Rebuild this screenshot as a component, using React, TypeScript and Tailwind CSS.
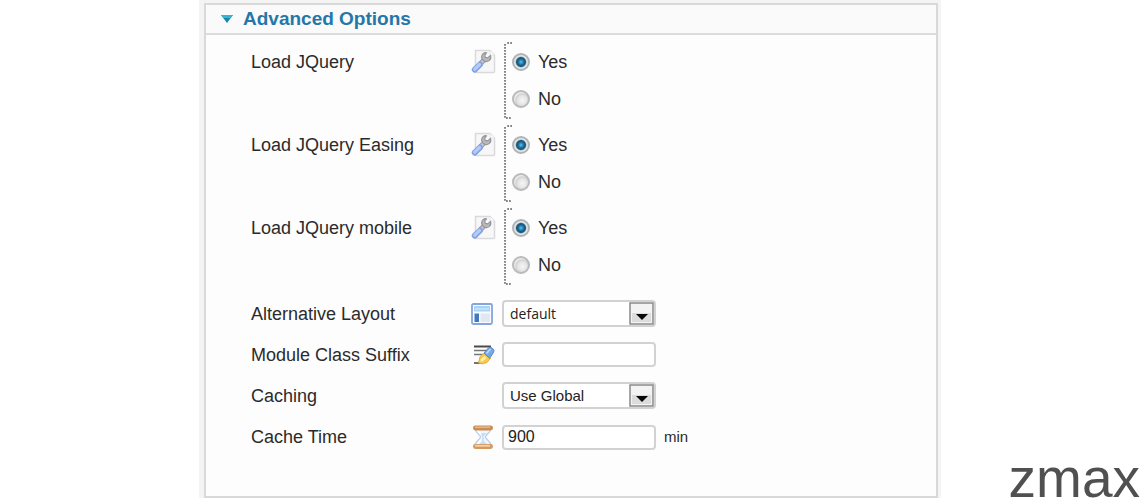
import { useState } from "react";
import type { ReactNode } from "react";

function WrenchIcon() {
  return (
    <svg width="25" height="25" viewBox="0 0 25 25" aria-hidden="true">
      <path d="M4.500 1.500H19l4.500 4.500v16.500a1 1 0 0 1-1 1h-17a1 1 0 0 1-1-1z" fill="#f7f7f8" stroke="#dadadc" strokeWidth="1.500" />
      <path d="M19 1.500V6h4.500" fill="#fff" stroke="#e2e2e4" />
      <path d="M9.500 14.500l4.500-4.500" stroke="#9a9a9e" strokeWidth="5" />
      <path d="M9.500 14.500l4.500-4.500" stroke="#c8c8cb" strokeWidth="3" />
      <path d="M14 3.600a4.400 4.400 0 0 0-3 6 4.500 4.500 0 0 0 7 2 4.400 4.400 0 0 0 1.500-5l-2.900 2.300-2.400-.6-.4-2.400 1.600-2a4 4 0 0 0-1.400-.3z" fill="#b9b9bd" stroke="#96969a" strokeWidth="1.200" />
      <path d="M3.800 20.700l5.200-5.200" stroke="#86a2e2" strokeWidth="6" strokeLinecap="round" />
      <path d="M3.800 20.200l4.700-4.700" stroke="#b4cbf7" strokeWidth="3.200" strokeLinecap="round" />
    </svg>
  );
}

function LayoutIcon() {
  return (
    <svg width="22" height="22" viewBox="0 0 22 22" aria-hidden="true">
      <rect x="1" y="1" width="20" height="20" rx="1.500" fill="#f8fbff" stroke="#86a5da" strokeWidth="1.800" />
      <rect x="3" y="3" width="16" height="5.500" fill="#a8d3f5" />
      <path d="M4 6h14" stroke="#d9efff" />
      <rect x="3.500" y="10.500" width="4.500" height="8.500" fill="#4478bd" />
      <rect x="9.500" y="10.500" width="9.500" height="8.500" fill="#e2e7f3" />
    </svg>
  );
}

function PencilIcon() {
  return (
    <svg width="24" height="22" viewBox="0 0 24 22" aria-hidden="true">
      <path d="M3 2.500h17" stroke="#4a4a4a" strokeWidth="2" />
      <path d="M3 6.500h13M3 10.500h9" stroke="#777" strokeWidth="1.300" />
      <path d="M3 19h8" stroke="#444" strokeWidth="1.500" />
      <path d="M7.500 18.800l1.700-6.500 4.500-3.300 5.800 5-3.500 4.500-5 1.300z" fill="#f4cc55" stroke="#dfae40" />
      <path d="M10 17l4.500-4" stroke="#fff0a8" strokeWidth="2.500" />
      <path d="M13 9.200l4.800-5.700q2-1 4 1.200 2 2 .8 3.600l-4 6z" fill="#75a8e8" stroke="#5284c8" />
      <path d="M15.500 9.500l4-4.500" stroke="#b7d6fa" strokeWidth="1.800" />
    </svg>
  );
}

function HourglassIcon() {
  return (
    <svg width="24" height="26" viewBox="0 0 24 26" aria-hidden="true">
      <path d="M4 4.500C4 9 9.500 10.500 9.500 13S4 17 4 21.500h16C20 17 14.500 15.500 14.500 13S20 9 20 4.500z" fill="#edf5fe" stroke="#b5cce8" strokeWidth="1.200" />
      <path d="M8 9h8l-3.200 3v5l3.700 4h-9l3.700-4v-5z" fill="#c9def5" />
      <path d="M7 6c.5 2 1.500 3 3 4.500M7 20c.5-2 1.500-3 3-4" stroke="#fff" strokeWidth="1.800" fill="none" />
      <rect x="2" y="1.500" width="20" height="5" rx="2.400" fill="#c98d55" />
      <path d="M4 3.200h15" stroke="#e6ba87" strokeWidth="1.500" />
      <rect x="2" y="20" width="20" height="5" rx="2.400" fill="#d09a61" />
      <path d="M4 21.800h15" stroke="#f3d2a6" strokeWidth="1.800" />
    </svg>
  );
}

function RadioRow({ id, label }: { id: string; label: string }) {
  const [value, setValue] = useState("Yes");
  return (
    <div className="flex items-start">
      <span id={`${id}-label`} className="w-[220px] shrink-0 pt-2 leading-6">
        {label}
      </span>
      <span className="w-8 shrink-0 pt-[7px]">
        <WrenchIcon />
      </span>
      <fieldset aria-labelledby={`${id}-label`} className="flex">
        <svg width="9" height="77" viewBox="0 0 9 77" fill="none" aria-hidden="true">
          <path d="M9 1H3M2 2V76M3 76H9" stroke="#5f5f5f" strokeWidth="1.500" strokeDasharray="1.800 1.200" />
        </svg>
        <div className="flex flex-col gap-[17px] py-2.5">
          {["Yes", "No"].map((option) => (
            <label key={option} className="flex h-5 items-center gap-2">
              <input
                type="radio"
                name={id}
                value={option}
                checked={value === option}
                onChange={() => setValue(option)}
                className="size-[18px] appearance-none rounded-full border-2 border-[#b8babb] bg-[radial-gradient(circle_at_60%_60%,#f6f6f6_0,#e4e4e4_40%,#d2d2d2_54%,#ededed_68%)] checked:border-[#b0b4b6] checked:bg-[radial-gradient(circle_at_50%_50%,#5cc4ea_0,#2c8cbe_18%,#175a86_36%,#2b5a76_46%,#dfe5e8_58%,#e8e8e8_100%)]"
              />
              {option}
            </label>
          ))}
        </div>
      </fieldset>
    </div>
  );
}

function FieldRow({ id, label, icon, children }: { id: string; label: string; icon?: ReactNode; children: ReactNode }) {
  return (
    <div className="flex items-center">
      <label htmlFor={id} className="w-[220px] shrink-0 leading-6">
        {label}
      </label>
      <span className="w-[31px] shrink-0">{icon}</span>
      {children}
    </div>
  );
}

function SelectBox({ id, options, font }: { id: string; options: string[]; font: string }) {
  return (
    <div className="relative w-[154px]">
      <select
        id={id}
        className={`block h-[27px] w-full appearance-none rounded-[4px] border-2 border-[#d2d2d2] bg-white pr-7 pl-1.5 text-[#222] ${font}`}
      >
        {options.map((option) => (
          <option key={option}>{option}</option>
        ))}
      </select>
      <svg className="pointer-events-none absolute top-[2px] right-[2px]" width="25" height="23" viewBox="0 0 25 23" aria-hidden="true">
        <rect x="1" y="1" width="23" height="21" fill="#f3f3f3" stroke="#8a8a8a" strokeWidth="1.500" />
        <rect x="3" y="11" width="19" height="9" fill="#dcdcdc" />
        <path d="M7 12h12l-6 6z" fill="#080808" />
      </svg>
    </div>
  );
}

const inputClass = "h-[25px] w-[154px] rounded-[4px] border-2 border-[#d2d2d2] bg-white px-1 text-base text-[#222]";

export default function App() {
  const [open, setOpen] = useState(true);
  return (
    <main className="relative min-h-screen bg-white font-['Liberation_Sans',Arial,sans-serif] text-lg text-[#2b2b2b]">
      <div className="mx-auto max-w-[742px] bg-[#f4f4f4] pt-[3px] pr-[3px] pl-[5px]">
        <section className="border-2 border-[#d9d9d9] bg-[#fdfdfd]">
          <h2 className="border-b-2 border-[#dcdcdc] bg-[#fafafa]">
            <button
              type="button"
              aria-expanded={open}
              onClick={() => setOpen(!open)}
              className="flex h-7 w-full items-center gap-2.5 pl-[15px] text-[19px] leading-7 font-bold text-[#2577a8]"
            >
              <svg width="12" height="8" viewBox="0 0 12 8" aria-hidden="true">
                <path d="M0 0h12L6 8z" fill="#1686ad" />
                <path d="M0 0h12l-2.300 3H2.300z" fill="#35b3d4" />
              </svg>
              Advanced Options
            </button>
          </h2>
          {open && (
            <div className="flex flex-col gap-[15px] pt-[7px] pb-[46px] pl-[45px]">
              <div className="flex flex-col gap-1.5">
                <RadioRow id="load-jquery" label="Load JQuery" />
                <RadioRow id="load-easing" label="Load JQuery Easing" />
                <RadioRow id="load-mobile" label="Load JQuery mobile" />
              </div>
              <FieldRow id="layout" label="Alternative Layout" icon={<LayoutIcon />}>
                <SelectBox id="layout" options={["default"]} font="font-['Open_Sans',sans-serif] text-sm" />
              </FieldRow>
              <FieldRow id="suffix" label="Module Class Suffix" icon={<PencilIcon />}>
                <input id="suffix" type="text" className={inputClass} />
              </FieldRow>
              <FieldRow id="caching" label="Caching">
                <SelectBox id="caching" options={["Use Global", "No caching"]} font="text-[15px]" />
              </FieldRow>
              <FieldRow id="cache-time" label="Cache Time" icon={<HourglassIcon />}>
                <input id="cache-time" type="text" defaultValue="900" className={inputClass} />
                <span className="pl-2 text-[15px]">min</span>
              </FieldRow>
            </div>
          )}
        </section>
      </div>
      <span className="absolute right-0 bottom-0 text-[55px] leading-10 text-[#505050]">zmax</span>
    </main>
  );
}
